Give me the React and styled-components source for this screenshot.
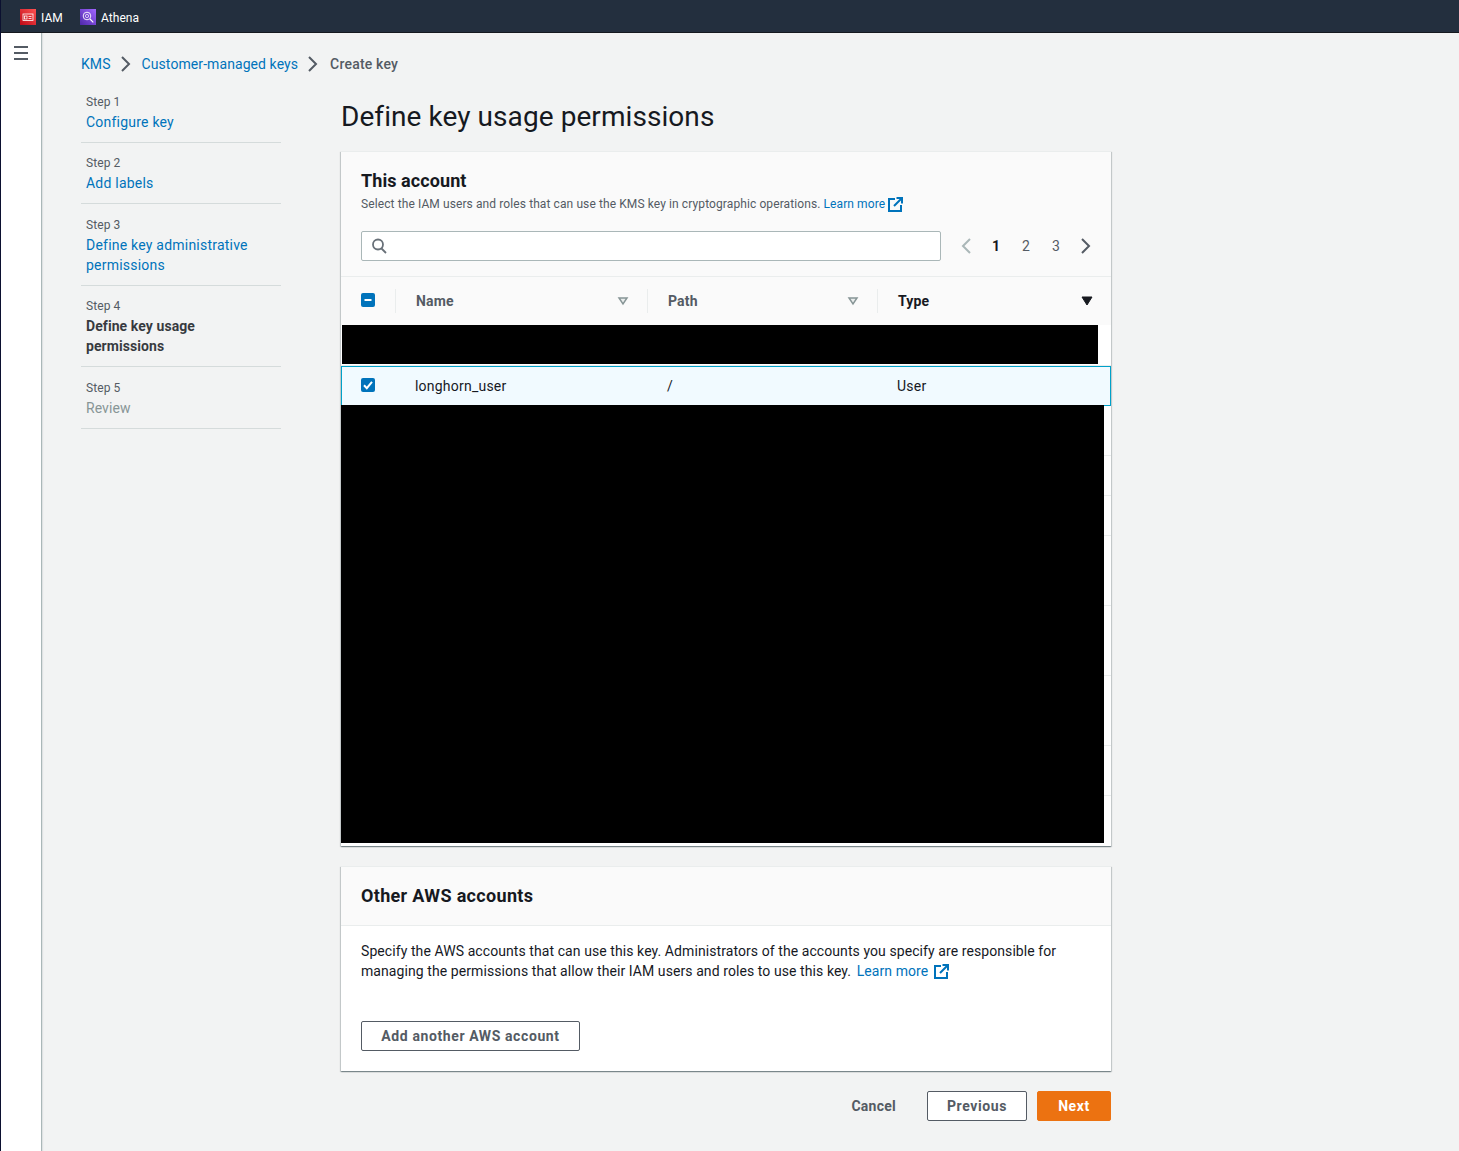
import React from "react";
import styled, { createGlobalStyle } from "styled-components";

const Global = createGlobalStyle`
  html, body { margin: 0; padding: 0; background: #f2f3f3; }
  body { font-family: Roboto, "Noto Sans", Arial, sans-serif; font-size: 14px; line-height: 20px; letter-spacing: .08px; color: #16191f; }
  * { box-sizing: border-box; }
`;

const Page = styled.div`
  width: 1459px; height: 1151px; display: flex; flex-direction: column; overflow: hidden;
  border-left: 1px solid #0b1030;
`;
const TopBar = styled.header`
  height: 33px; margin-left: -1px; background: #232f3e; border-bottom: 1px solid #16191f; flex: none;
  display: flex; align-items: center; padding: 2px 0 0 20px; gap: 17px;
`;
const Service = styled.div`display: flex; align-items: center; gap: 5px; color: #fff; font-size: 12px; line-height: 16px;`;
const ServiceName = styled.span`padding-top: 1px;`;
const Body = styled.div`flex: 1; display: flex; min-height: 0;`;
const Rail = styled.nav`
  width: 41px; flex: none; background: #fff; border-right: 1px solid #aab7b8; box-shadow: 1px 0 1px rgba(0,28,36,.08);
  display: flex; justify-content: center; padding: 13px 0 0 0;
`;
const Content = styled.main`flex: 1; padding: 21px 0 0 39px; min-width: 0;`;
const Crumbs = styled.div`display: flex; align-items: center; height: 20px; color: #545b64;`;
const CrumbLink = styled.a`color: #0073bb;`;
const CrumbCurrent = styled.span`color: #545b64; font-weight: 500; letter-spacing: .2px; margin-left: 1px;`;
const CrumbSep = styled.svg`width: 10px; height: 16px; margin: 0 11px 0 10px; flex: none;`;
const Columns = styled.div`display: grid; grid-template-columns: 200px 770px; column-gap: 60px; margin-top: 7px;`;
const Steps = styled.ol`list-style: none; margin: 0; padding: 0;`;
const Step = styled.li`padding: 12.5px 0 10px 5px; border-bottom: 1px solid #d5dbdb;`;
const StepLabel = styled.div`font-size: 12px; line-height: 17px; margin-bottom: 1px; color: #545b64;`;
const StepLink = styled.a`color: #0073bb; display: block; letter-spacing: .22px;`;
const StepActive = styled.div`font-weight: 700; color: #16191f; opacity: .85; max-width: 170px;`;
const StepMuted = styled.div`color: #879596;`;
const Wizard = styled.div`min-width: 0;`;
const Title = styled.h1`margin: 18px 0 16px; font-size: 28px; line-height: 36px; font-weight: 400; letter-spacing: .07px; color: #16191f; height: 36px;`;
const Card = styled.section`
  background: #fff; border-top: 1px solid #eaeded;
  box-shadow: 0 1px 1px 0 rgba(0,28,36,.3), 1px 1px 1px 0 rgba(0,28,36,.15), -1px 1px 1px 0 rgba(0,28,36,.15);
`;
const TableHead = styled.div`background: #fafafa; border-bottom: 1px solid #eaeded; padding: 18px 10px 15px 20px;`;
const CardTitle = styled.h2`margin: 0; font-size: 18px; line-height: 22px; font-weight: 700; letter-spacing: ${p => (p.$wide ? ".33px" : ".08px")}; color: #16191f;`;
const Desc = styled.p`margin: 3px 0 0; font-size: 12px; line-height: 18px; letter-spacing: .1px; color: #545b64; display: flex; align-items: center;`;
const Ext = styled.svg`flex: none; display: inline-block; vertical-align: -3px;`;
const DescLink = styled.a`color: #0073bb; margin-left: 3px; margin-right: 3px;`;
const Tools = styled.div`display: flex; align-items: center; margin-top: 18px; gap: 10px;`;
const Search = styled.div`
  width: 580px; height: 30px; background: #fff; border: 1px solid #aab7b8; border-radius: 2px;
  display: flex; align-items: center; padding-left: 9px;
`;
const Pager = styled.div`display: flex; align-items: center;`;
const PageCell = styled.span`
  width: 30px; height: 30px; display: flex; align-items: center; justify-content: center;
  color: ${p => (p.$current ? "#16191f" : "#545b64")}; font-weight: ${p => (p.$current ? 700 : 400)};
`;
const HeadRow = styled.div`
  display: grid; grid-template-columns: 54px 252px 230px 1fr; height: 48px; align-items: center; background: #fafafa;
`;
const BoxCell = styled.div`padding-left: 20px; display: flex; align-items: center; margin-top: -2px;`;
const HeadCell = styled.div`
  height: 24px; display: flex; align-items: center; justify-content: space-between; border-left: 1px solid #eaeded;
  padding: 0 18px 0 20px; font-weight: 700; letter-spacing: .15px; color: ${p => (p.$sorted ? "#16191f" : "#545b64")};
`;
const Rows = styled.div`position: relative;`;
const Row = styled.div`
  height: ${p => p.$h}px; border-bottom: ${p => (p.$last ? "none" : "1px solid #eaeded")};
`;
const SelectedRow = styled.div`
  display: grid; grid-template-columns: 54px 252px 230px 1fr; align-items: center; height: 40px;
  background: #f1faff; border: 1px solid #00a1c9; color: #16191f; position: relative; letter-spacing: .22px;
`;
const RowBox = styled.div`padding-left: 19px; display: flex; align-items: center; margin-top: -2px;`;
const RowCell = styled.div`padding-left: 19px;`;
const Redaction = styled.div`
  position: absolute; background: #000; left: ${p => p.$l}px; top: ${p => p.$t}px; width: ${p => p.$w}px; height: ${p => p.$hh}px;
`;
const SecondCard = styled(Card)`margin-top: 20px;`;
const SecondHead = styled.div`background: #fafafa; border-bottom: 1px solid #eaeded; height: 59px; padding: 0 20px; display: flex; align-items: center;`;
const SecondBody = styled.div`padding: 15px 20px 20px;`;
const Para = styled.p`margin: 0; color: #16191f; width: 720px;`;
const BodyLink = styled.a`color: #0073bb; margin: 0 2px;`;
const Button = styled.button`
  font: inherit; font-weight: 700; letter-spacing: .6px; height: 30px; border-radius: 2px; background: ${p => (p.$primary ? "#ec7211" : "#fff")};
  color: ${p => (p.$primary ? "#fff" : "#545b64")}; border: 1px solid ${p => (p.$primary ? "#ec7211" : "#545b64")};
  padding: 0 20px; display: inline-flex; align-items: center; justify-content: center; white-space: nowrap;
`;
const AddButton = styled(Button)`margin-top: 40px; width: 219px; padding: 0;`;
const Footer = styled.div`display: flex; justify-content: flex-end; align-items: center; margin-top: 20px; gap: 10px;`;
const Cancel = styled.button`
  font: inherit; font-weight: 700; letter-spacing: .25px; color: #545b64; background: none; border: 0; padding: 0 21px 0 20px; height: 30px;
`;
const PrevButton = styled(Button)`width: 100px; padding: 0;`;
const NextButton = styled(Button)`width: 74px; padding: 0;`;

const ExtIcon = ({ size = 15 }) => (
  <Ext width={size} height={size} viewBox="0 0 15 15" fill="none" stroke="#0073bb" strokeWidth="2">
    <path d="M7 2H1v12h12V8" />
    <path d="M6 9l7.5-7.5M8.5 1H14v5.5" />
  </Ext>
);
const Chevron = ({ color = "#545b64" }) => (
  <svg width="12" height="16" viewBox="0 0 12 16" fill="none" stroke={color} strokeWidth="2">
    <path d="M2 1l7 7-7 7" />
  </svg>
);
const ChevronLeft = ({ color }) => (
  <svg width="12" height="16" viewBox="0 0 12 16" fill="none" stroke={color} strokeWidth="2">
    <path d="M10 1L3 8l7 7" />
  </svg>
);
const Caret = ({ filled }) => (
  <svg width="12" height="10" viewBox="0 0 12 10">
    {filled ? <path d="M1 1h10L6 9z" fill="#16191f" stroke="#16191f" /> : <path d="M2 2h8L6 8z" fill="#eaeded" stroke="#879596" strokeWidth="1.5" />}
  </svg>
);
const Check = ({ mixed }) => (
  <svg width="14" height="14" viewBox="0 0 14 14">
    <rect width="14" height="14" rx="2" fill="#0073bb" />
    {mixed ? <path d="M3.5 7h7" stroke="#fff" strokeWidth="2" /> : <path d="M3 7.2l2.8 3L11 3.8" stroke="#fff" strokeWidth="2" fill="none" />}
  </svg>
);

const IamIcon = () => (
  <svg width="16" height="16" viewBox="0 0 16 16">
    <defs><linearGradient id="iamG" x1="0" y1="1" x2="1" y2="0"><stop offset="0" stopColor="#bd0816" /><stop offset="1" stopColor="#ff5252" /></linearGradient></defs>
    <rect width="16" height="16" fill="url(#iamG)" />
    <rect x="3" y="5" width="10" height="6.5" fill="none" stroke="#fff" strokeWidth=".8" />
    <rect x="4.5" y="7" width="2.5" height="3" fill="none" stroke="#fff" strokeWidth=".8" />
    <path d="M8.5 7.5h3M8.5 9.5h3" stroke="#fff" strokeWidth=".8" />
  </svg>
);
const AthenaIcon = () => (
  <svg width="16" height="16" viewBox="0 0 16 16">
    <defs><linearGradient id="athG" x1="0" y1="1" x2="1" y2="0"><stop offset="0" stopColor="#4d27a8" /><stop offset="1" stopColor="#a166ff" /></linearGradient></defs>
    <rect width="16" height="16" fill="url(#athG)" />
    <circle cx="7" cy="7" r="3.8" fill="none" stroke="#fff" strokeWidth=".9" />
    <circle cx="7" cy="7" r="1.6" fill="none" stroke="#fff" strokeWidth=".7" />
    <path d="M10 10l3.3 3.3" stroke="#fff" strokeWidth="1.2" />
  </svg>
);

const steps = [
  { n: 1, link: "Configure key" },
  { n: 2, link: "Add labels" },
  { n: 3, link: "Define key administrative permissions" },
  { n: 4, active: "Define key usage permissions" },
  { n: 5, muted: "Review" },
];

const plainRows = [50, 40, 40, 70, 70, 70, 50, 50];

export default function App() {
  return (
    <>
      <Global />
      <Page>
        <TopBar>
          <Service><IamIcon /><ServiceName>IAM</ServiceName></Service>
          <Service><AthenaIcon /><ServiceName>Athena</ServiceName></Service>
        </TopBar>
        <Body>
          <Rail>
            <svg width="14" height="14" viewBox="0 0 14 14" stroke="#545b64" strokeWidth="2">
              <path d="M0 1h14M0 7h14M0 13h14" />
            </svg>
          </Rail>
          <Content>
            <Crumbs>
              <CrumbLink>KMS</CrumbLink>
              <CrumbSep viewBox="0 0 10 16" fill="none" stroke="#545b64" strokeWidth="2"><path d="M1 1l7 7-7 7" /></CrumbSep>
              <CrumbLink>Customer-managed keys</CrumbLink>
              <CrumbSep viewBox="0 0 10 16" fill="none" stroke="#545b64" strokeWidth="2"><path d="M1 1l7 7-7 7" /></CrumbSep>
              <CrumbCurrent>Create key</CrumbCurrent>
            </Crumbs>
            <Columns>
              <Steps>
                {steps.map(s => (
                  <Step key={s.n}>
                    <StepLabel>Step {s.n}</StepLabel>
                    {s.link && <StepLink>{s.link}</StepLink>}
                    {s.active && <StepActive>{s.active}</StepActive>}
                    {s.muted && <StepMuted>{s.muted}</StepMuted>}
                  </Step>
                ))}
              </Steps>
              <Wizard>
                <Title>Define key usage permissions</Title>
                <Card>
                  <TableHead>
                    <CardTitle>This account</CardTitle>
                    <Desc>
                      Select the IAM users and roles that can use the KMS key in cryptographic operations.
                      <DescLink>Learn more</DescLink>
                      <ExtIcon />
                    </Desc>
                    <Tools>
                      <Search>
                        <svg width="16" height="16" viewBox="0 0 16 16" fill="none" stroke="#687078" strokeWidth="1.8">
                          <circle cx="7" cy="6.5" r="5" />
                          <path d="M10.5 10.5L15 15" />
                        </svg>
                      </Search>
                      <Pager>
                        <PageCell><ChevronLeft color="#aab7b8" /></PageCell>
                        <PageCell $current>1</PageCell>
                        <PageCell>2</PageCell>
                        <PageCell>3</PageCell>
                        <PageCell><Chevron /></PageCell>
                      </Pager>
                    </Tools>
                  </TableHead>
                  <HeadRow>
                    <BoxCell><Check mixed /></BoxCell>
                    <HeadCell>Name<Caret /></HeadCell>
                    <HeadCell>Path<Caret /></HeadCell>
                    <HeadCell $sorted>Type<Caret filled /></HeadCell>
                  </HeadRow>
                  <Rows>
                    <Row $h={41} />
                    <SelectedRow>
                      <RowBox><Check /></RowBox>
                      <RowCell>longhorn_user</RowCell>
                      <RowCell>/</RowCell>
                      <RowCell>User</RowCell>
                    </SelectedRow>
                    {plainRows.map((h, i) => (
                      <Row key={i} $h={h} $last={i === plainRows.length - 1} />
                    ))}
                    <Redaction $l={1} $t={0} $w={756} $hh={39} />
                    <Redaction $l={0} $t={80} $w={763} $hh={438} />
                  </Rows>
                </Card>
                <SecondCard>
                  <SecondHead><CardTitle $wide>Other AWS accounts</CardTitle></SecondHead>
                  <SecondBody>
                    <Para>
                      Specify the AWS accounts that can use this key. Administrators of the accounts you specify are responsible for managing the permissions that allow their IAM users and roles to use this key. <BodyLink>Learn more</BodyLink> <ExtIcon />
                    </Para>
                    <AddButton>Add another AWS account</AddButton>
                  </SecondBody>
                </SecondCard>
                <Footer>
                  <Cancel>Cancel</Cancel>
                  <PrevButton>Previous</PrevButton>
                  <NextButton $primary>Next</NextButton>
                </Footer>
              </Wizard>
            </Columns>
          </Content>
        </Body>
      </Page>
    </>
  );
}
